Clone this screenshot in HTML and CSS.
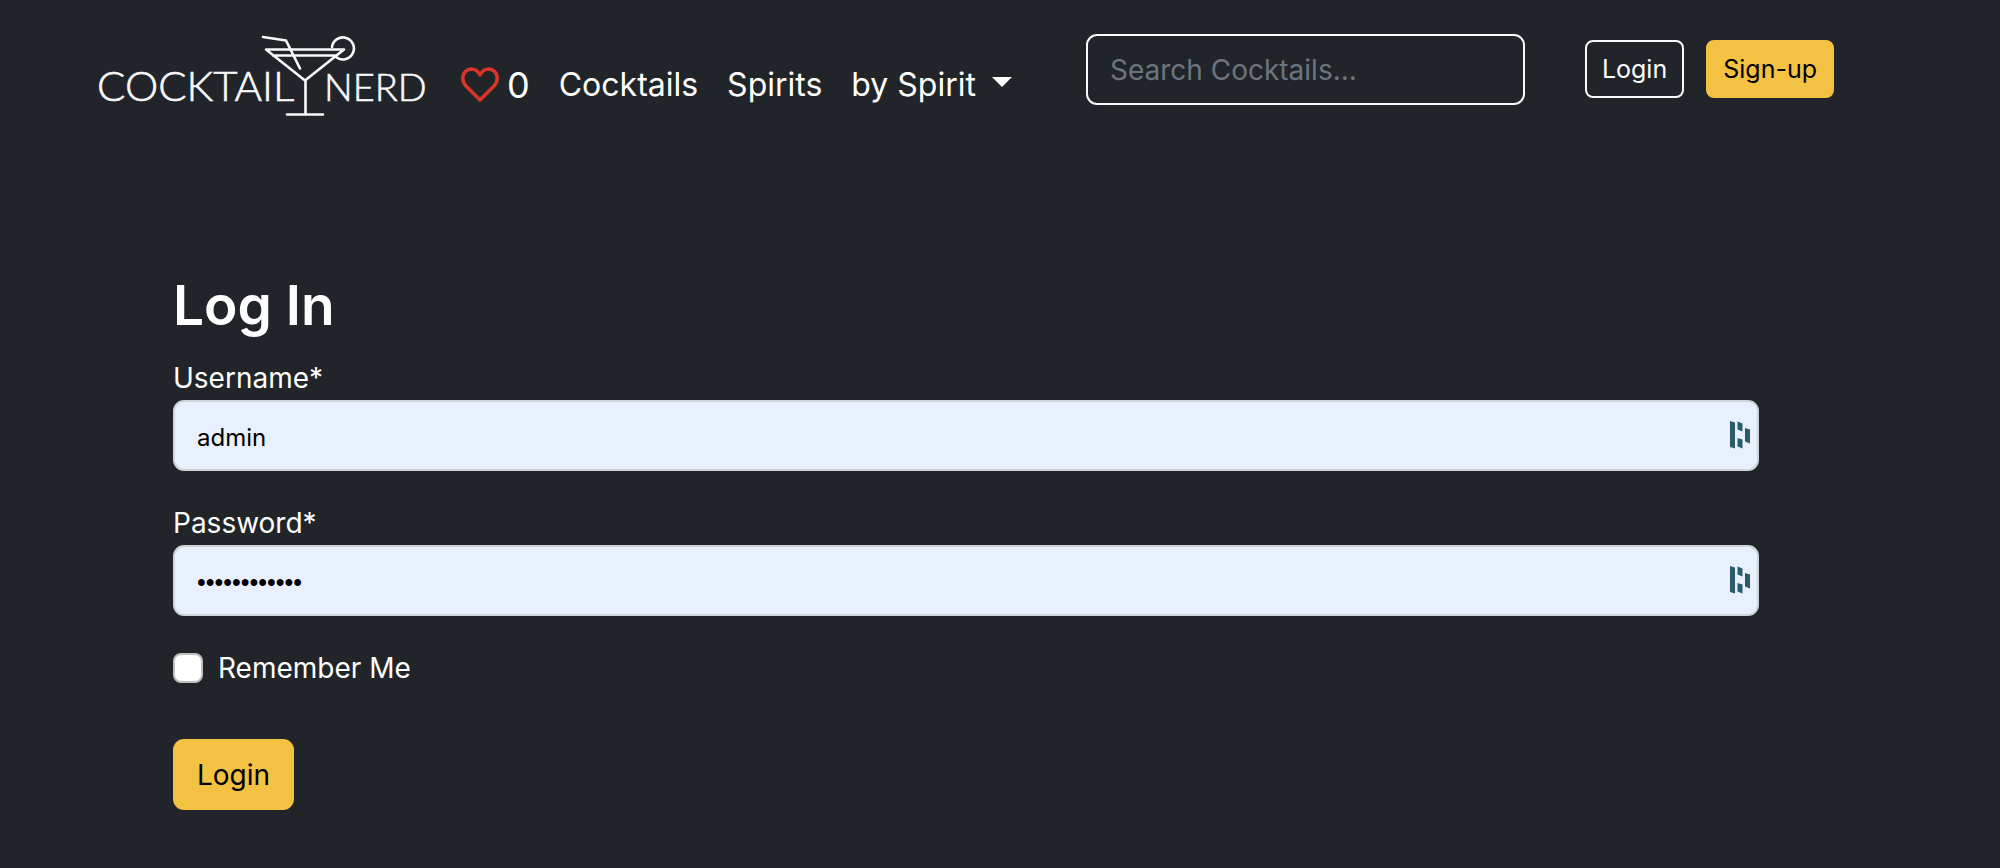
FILE: index.html
```html
<!DOCTYPE html>
<html lang="en">
<head>
<meta charset="utf-8">
<title>Cocktail Nerd – Log In</title>
<link rel="stylesheet" href="styles.css">
</head>
<body>
<header class="site-header">
  <a class="brand" href="#" aria-label="Cocktail Nerd">
    <svg class="brand-logo" viewBox="0 0 336 84" fill="none">
      <text class="brand-word" x="0" y="67">COCKTAIL</text>
      <text class="brand-word brand-word-end" x="227" y="67">NERD</text>
      <g stroke="#f8f9fa" stroke-width="2.600" stroke-linecap="round" stroke-linejoin="round">
        <path d="M166 3l23 3.500 14 28"/>
        <path d="M169 15.500h78l-39 31-39-31zM176 21.500h63"/>
        <path d="M208.500 47v33M190 80.500h36"/>
        <path d="M235 13a11 11 0 1 1 4 10"/>
      </g>
    </svg>
  </a>
  <nav class="site-nav">
    <a class="nav-link favorites" href="#" aria-label="Favorites: 0">
      <svg class="heart" viewBox="0 0 38 36" fill="none" stroke="#dc3528" stroke-width="3.500" stroke-linejoin="round"><path d="M19 33L5 19C-1 12 2 3 10 2c4 0 7 2 9 6 2-4 5-6 9-6 8 1 11 10 5 17z"/></svg>
      <span class="count">0</span>
    </a>
    <a class="nav-link" href="#">Cocktails</a>
    <a class="nav-link" href="#">Spirits</a>
    <a class="nav-link dropdown" href="#">by Spirit</a>
  </nav>
  <form class="search" role="search">
    <input class="search-input" type="search" placeholder="Search Cocktails..." aria-label="Search cocktails">
  </form>
  <div class="account">
    <button class="btn-small btn-outline" type="button">Login</button>
    <button class="btn-small btn-warning" type="button">Sign-up</button>
  </div>
</header>
<main class="content">
  <h1 class="title">Log In</h1>
  <form class="login-form">
    <div class="field">
      <label for="username">Username*</label>
      <div class="control">
        <input class="text-input" id="username" type="text" value="admin">
        <svg class="manager-icon" viewBox="0 0 20 28" fill="#2b5c6e"><path d="M0 0l5 1.500v26L0 26zM7.500 .5l5 2v8l-5-2zM7.500 17l5 1.500v9l-5-2zM15 7l5 1.500v14l-5-2z"/></svg>
      </div>
    </div>
    <div class="field">
      <label for="password">Password*</label>
      <div class="control">
        <input class="text-input password" id="password" type="password" value="cocktailnerd">
        <svg class="manager-icon" viewBox="0 0 20 28" fill="#2b5c6e"><path d="M0 0l5 1.500v26L0 26zM7.500 .5l5 2v8l-5-2zM7.500 17l5 1.500v9l-5-2zM15 7l5 1.500v14l-5-2z"/></svg>
      </div>
    </div>
    <div class="remember">
      <input class="check" id="remember" type="checkbox">
      <label for="remember">Remember Me</label>
    </div>
    <button class="btn-submit" type="submit">Login</button>
  </form>
</main>
</body>
</html>
```

FILE: styles.css
```css
* { box-sizing: border-box; }
body {
  margin: 0;
  min-height: 100vh;
  background: #212529;
  color: #fff;
  font: 28px/44px Inter, "Liberation Sans", sans-serif;
}
input, button { font: inherit; }
a { color: inherit; text-decoration: none; }

.site-header {
  display: flex;
  align-items: flex-start;
  padding: 34px 166px 0 97px;
}
.brand { flex: none; margin-right: 28px; }
.brand-logo { display: block; width: 336px; height: 84px; overflow: visible; }
.brand-word {
  fill: #f8f9fa;
  stroke: #f8f9fa;
  stroke-width: 0.6px;
  font: 300 42px Lato, sans-serif;
}
.brand-word-end { font-size: 38px; }
.site-nav {
  display: flex;
  gap: 29px;
  padding-top: 29px;
  font-size: 32px;
}
.nav-link { display: flex; align-items: center; white-space: nowrap; }
.favorites { gap: 8px; }
.count { font-size: 36px; }
.heart { width: 38px; height: 36px; }
.dropdown::after {
  content: "";
  margin: -6px 0 0 16px;
  border: 10px solid transparent;
  border-top-color: #fff;
  border-bottom: 0;
}
.search { flex: 1; margin-left: 74px; }
.search-input {
  display: block;
  width: 100%;
  height: 71px;
  padding: 0 22px;
  border: 2px solid #f8f9fa;
  border-radius: 11px;
  background: transparent;
  color: #fff;
  outline: 0;
  appearance: none;
}
.search-input::placeholder { color: #6c757d; opacity: 1; }
.account { display: flex; gap: 22px; margin-left: 60px; padding-top: 6px; }
.btn-small {
  height: 58px;
  padding: 0 15px;
  border: 2px solid #f8f9fa;
  border-radius: 8px;
  font-size: 25px;
}
.btn-outline { background: transparent; color: #fff; }
.btn-warning { border-color: #f4c242; background: #f4c242; color: #000; }

.content { padding: 151px 241px 0 173px; }
.title { margin: 0 0 15px; font-size: 55px; font-weight: 600; line-height: 72px; }
.login-form { display: flex; flex-direction: column; align-items: stretch; }
.field { margin-bottom: 30px; }
.field label { display: block; }
.control { position: relative; }
.text-input {
  display: block;
  width: 100%;
  height: 71px;
  padding: 3px 22px 0;
  border: 2px solid #ced4da;
  border-radius: 11px;
  background: #e8f0fe;
  color: #000;
  font-size: 24px;
}
.password { font-family: "Liberation Sans", sans-serif; font-size: 25px; }
.manager-icon { position: absolute; right: 9px; top: 21px; width: 20px; height: 28px; }
.remember { display: flex; align-items: center; gap: 15px; margin-bottom: 49px; }
.check {
  width: 30px;
  height: 30px;
  margin: 0;
  border: 2px solid #bfbfbf;
  border-radius: 8px;
  background: #fff;
  appearance: none;
}
.btn-submit {
  align-self: flex-start;
  height: 71px;
  padding: 0 24px;
  border: 0;
  border-radius: 11px;
  background: #f4c242;
  color: #000;
}
```
